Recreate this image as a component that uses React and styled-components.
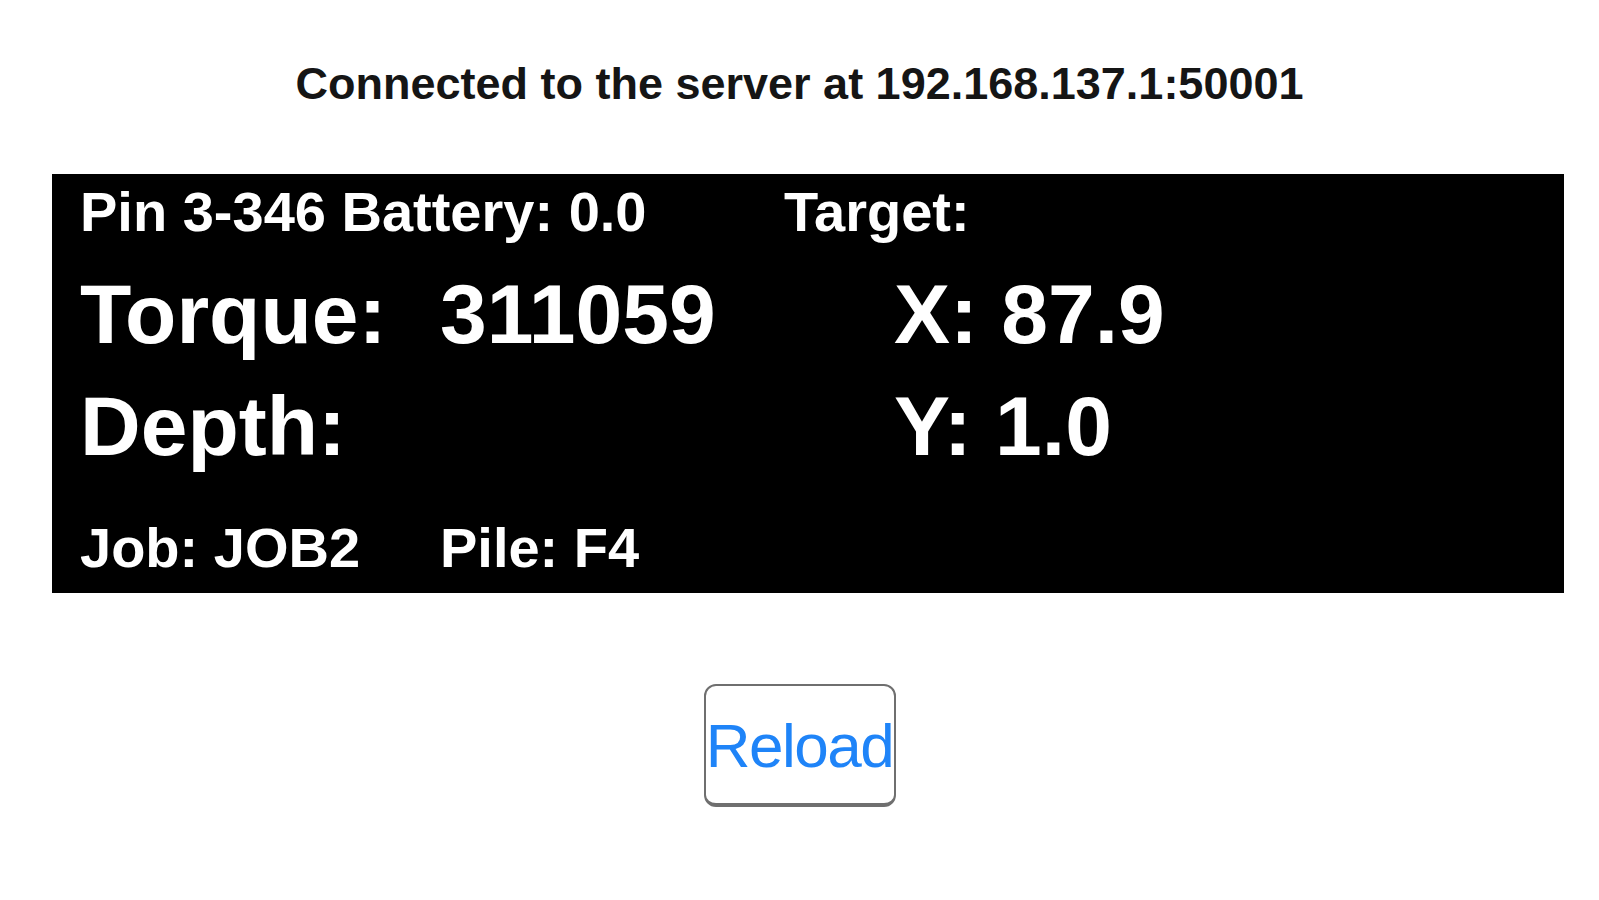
import React from "react";
import styled, { createGlobalStyle } from "styled-components";

const GlobalStyle = createGlobalStyle`
  html, body {
    margin: 0;
    padding: 0;
    background: #ffffff;
  }
  body {
    font-family: "Liberation Sans", Arial, Helvetica, sans-serif;
  }
`;

const reading = {
  pin: "3-346",
  battery: "0.0",
  torque: "311059",
  depth: "",
  x: "87.9",
  y: "1.0",
  job: "JOB2",
  pile: "F4",
};

export default function App() {
  return (
    <Page>
      <GlobalStyle />
      <Status>Connected to the server at 192.168.137.1:50001</Status>
      <Panel>
        <Row $size={56} $lh={66}>
          <Cell $span="1 / 3">
            Pin {reading.pin} Battery: {reading.battery}
          </Cell>
          <Cell $span="3 / 5">Target:</Cell>
        </Row>
        <Row $size={84} $lh={112} $mt={13}>
          <Cell $span="1 / 2">Torque:</Cell>
          <Cell $span="2 / 4">{reading.torque}</Cell>
          <Cell $span="4 / 5">X: {reading.x}</Cell>
        </Row>
        <Row $size={84} $lh={112}>
          <Cell $span="1 / 2">Depth:</Cell>
          <Cell $span="2 / 4">{reading.depth}</Cell>
          <Cell $span="4 / 5">Y: {reading.y}</Cell>
        </Row>
        <Row $size={56} $lh={66} $mt={33}>
          <Cell $span="1 / 2">Job: {reading.job}</Cell>
          <Cell $span="2 / 5">Pile: {reading.pile}</Cell>
        </Row>
      </Panel>
      <ReloadButton type="button">Reload</ReloadButton>
    </Page>
  );
}

const Page = styled.main`
  display: flex;
  flex-direction: column;
  padding-top: 58px;
  min-height: 900px;
  box-sizing: border-box;
`;

const Status = styled.h1`
  margin: 0;
  text-align: center;
  font-size: 45px;
  line-height: 52px;
  font-weight: 700;
  color: #151515;
`;

const Panel = styled.section`
  margin: 64px 35px 0 52px;
  height: 419px;
  box-sizing: border-box;
  padding: 5px 28px 12px;
  background: #000;
  color: #fff;
  display: flex;
  flex-direction: column;
`;

const Row = styled.div`
  display: grid;
  grid-template-columns: 360px 344px 110px 1fr;
  margin-top: ${(p) => p.$mt || 0}px;
  font-size: ${(p) => p.$size}px;
  line-height: ${(p) => p.$lh}px;
  font-weight: 700;
  white-space: nowrap;
`;

const Cell = styled.span`
  grid-column: ${(p) => p.$span};
`;

const ReloadButton = styled.button`
  align-self: center;
  margin-top: 91px;
  width: 192px;
  height: 123px;
  box-sizing: border-box;
  padding: 2px 0 0;
  display: flex;
  align-items: center;
  justify-content: center;
  background: #fff;
  border: 2px solid #6f6f6f;
  border-bottom-width: 4px;
  border-radius: 12px;
  font-family: "Liberation Sans", Arial, Helvetica, sans-serif;
  font-size: 62px;
  letter-spacing: -1.5px;
  line-height: 70px;
  color: #1f84f8;
  cursor: pointer;
`;
